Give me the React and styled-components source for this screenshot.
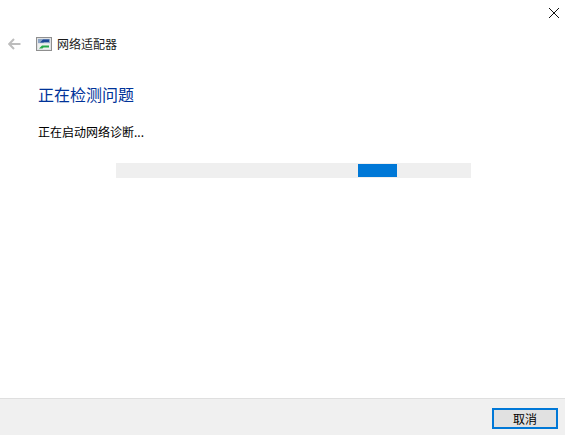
import React from "react";
import styled, { createGlobalStyle } from "styled-components";

const Global = createGlobalStyle`
  html, body { margin: 0; padding: 0; background: #fff; overflow: hidden; }
  * { box-sizing: border-box; }
`;

const Window = styled.div`
  width: 565px;
  height: 435px;
  display: flex;
  flex-direction: column;
  background: #fff;
  font-family: "Noto Sans CJK SC", "Noto Sans", sans-serif;
  color: #000;
`;

const TitleBar = styled.div`
  height: 32px;
  display: flex;
  justify-content: flex-end;
  padding: 7px 5px 0 0;
`;

const CloseButton = styled.button`
  width: 12px;
  height: 12px;
  padding: 0;
  border: 0;
  background: none;
  display: block;
  line-height: 0;
`;

const NavRow = styled.div`
  height: 24px;
  display: flex;
  align-items: center;
  padding-left: 8px;
`;

const BackButton = styled.button`
  width: 13px;
  height: 12px;
  padding: 0;
  border: 0;
  background: none;
  margin-right: 15px;
  line-height: 0;
`;

const AppIcon = styled.svg`
  width: 16px;
  height: 16px;
  margin-right: 5px;
  flex: none;
`;

const NavTitle = styled.span`
  font-size: 12px;
  line-height: 24px;
  color: #1a1a1a;
`;

const Content = styled.main`
  flex: 1;
  display: flex;
  flex-direction: column;
  padding: 26px 0 0 38px;
`;

const Heading = styled.h1`
  margin: 0;
  font-size: 16px;
  font-weight: 400;
  line-height: 24px;
  color: #003399;
`;

const Status = styled.p`
  margin: 17px 0 0;
  font-size: 12px;
  line-height: 18px;
  color: #000;
`;

const ProgressTrack = styled.div`
  position: relative;
  width: 355px;
  height: 15px;
  margin: 22px 0 0 78px;
  background: #efefef;
`;

const ProgressChunk = styled.div`
  position: absolute;
  top: 1px;
  bottom: 1px;
  left: ${(p) => p.$left}px;
  width: ${(p) => p.$width}px;
  background: #0078d7;
`;

const Footer = styled.footer`
  height: 37px;
  display: flex;
  justify-content: flex-end;
  align-items: flex-start;
  padding: 9px 7px 0 0;
  background: #f0f0f0;
  border-top: 1px solid #dfdfdf;
`;

const CancelButton = styled.button`
  width: 66px;
  height: 21px;
  padding: 0;
  border: 2px solid #0078d7;
  background: #e1e1e1;
  font-family: inherit;
  font-size: 12px;
  line-height: 15px;
  color: #000;
`;

export default function App() {
  return (
    <Window>
      <Global />
      <TitleBar>
        <CloseButton aria-label="关闭">
          <svg width="12" height="12" viewBox="0 0 12 12">
            <path d="M1 1 L11 11 M11 1 L1 11" stroke="#111" strokeWidth="1" fill="none" />
          </svg>
        </CloseButton>
      </TitleBar>
      <NavRow>
        <BackButton aria-label="返回">
          <svg width="13" height="12" viewBox="0 0 13 12">
            <path d="M6 1 L1.2 6 L6 11 M1.2 6 H12.5" stroke="#bdbdbd" strokeWidth="2" fill="none" />
          </svg>
        </BackButton>
        <AppIcon viewBox="0 0 16 16">
          <rect x="0.5" y="1.5" width="15" height="13" fill="#dfe2e5" stroke="#8f8f8f" />
          <rect x="2" y="3" width="12" height="4" fill="#8ea6c6" />
          <path d="M4 6.5 L7 3.5 H13 V6 H8 L7.5 6.5 Z" fill="#1c4796" />
          <rect x="2" y="8" width="12" height="5" fill="#eef0f0" />
          <path d="M3 12.5 L6 9.5 H13 V11.5 H7.5 L6.5 12.5 Z" fill="#27a84a" />
        </AppIcon>
        <NavTitle>网络适配器</NavTitle>
      </NavRow>
      <Content>
        <Heading>正在检测问题</Heading>
        <Status>正在启动网络诊断...</Status>
        <ProgressTrack>
          <ProgressChunk $left={242} $width={39} />
        </ProgressTrack>
      </Content>
      <Footer>
        <CancelButton>取消</CancelButton>
      </Footer>
    </Window>
  );
}
